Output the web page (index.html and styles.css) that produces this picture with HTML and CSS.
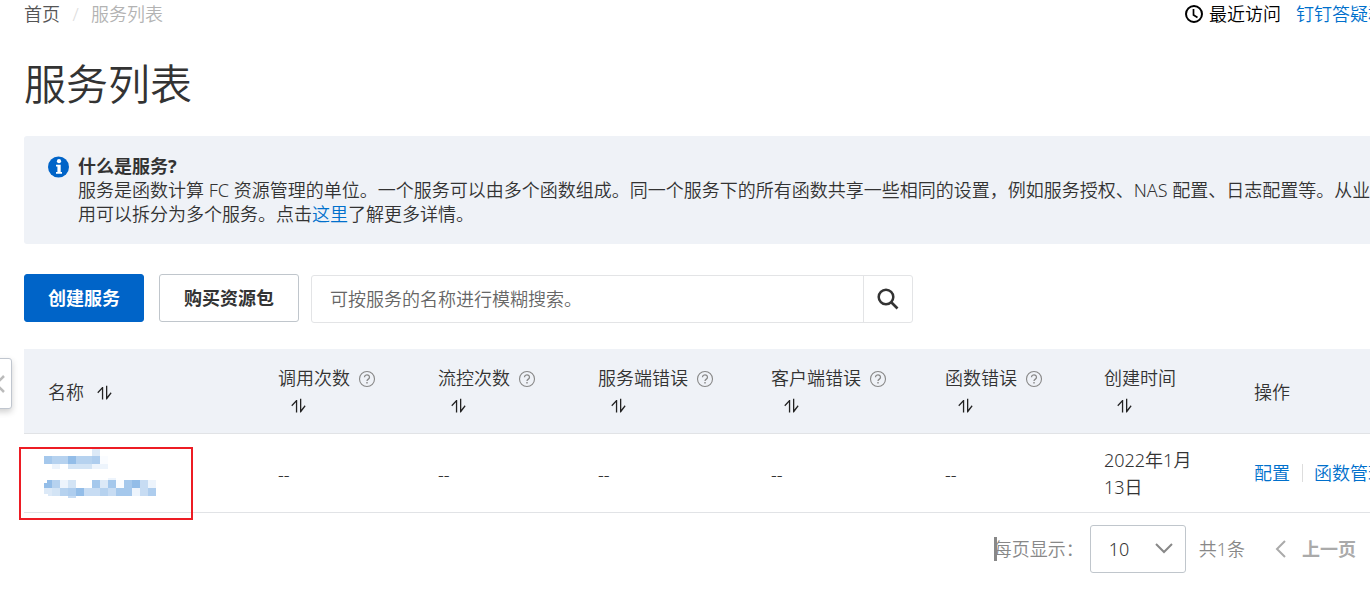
FILE: index.html
```html
<!DOCTYPE html>
<html lang="zh-CN">
<head>
<meta charset="utf-8">
<title>服务列表</title>
<link rel="stylesheet" href="styles.css">
</head>
<body>
<svg class="defs" aria-hidden="true">
  <symbol id="help" viewBox="0 0 18 18"><circle cx="9" cy="9" r="7.5" fill="none" stroke="#888" stroke-width="1.1"/><path d="M6.500 7.300a2.500 2.300 0 1 1 3.900 1.800c-.9.600-1.400.9-1.400 2" fill="none" stroke="#888" stroke-width="1.300"/><path d="M8.300 12h1.400v1.400H8.300z" fill="#888"/></symbol>
  <symbol id="sort" viewBox="0 0 15 15"><path d="M6.200 2v12.500H4.900V4.300L1.200 8.200l-.9-.9L5.200 2zM9 .8h1.300v10.700l3.400-4.200.9 1-4.700 6.200H9z" fill="#222"/></symbol>
</svg>
<button class="handle" type="button" aria-label="收起"><svg width="12" height="18" viewBox="0 0 12 18"><path d="M11 1 3 9l8 8" fill="none" stroke="#bbb" stroke-width="2.500"/></svg></button>
<main class="page">
  <header class="top">
    <nav class="crumbs"><a class="home" href="#">首页</a><span class="slash">/</span><span>服务列表</span></nav>
    <div class="quick">
      <button class="recent" type="button"><svg width="20" height="20" viewBox="0 0 20 20"><circle cx="10" cy="10" r="8" fill="none" stroke="#000" stroke-width="2"/><path d="M9.500 5v6l4 2.500" fill="none" stroke="#000" stroke-width="1.700"/></svg>最近访问</button>
      <a href="#">钉钉答疑群</a>
    </div>
  </header>
  <h1 class="title">服务列表</h1>
  <section class="notice">
    <svg class="info" width="22" height="22" viewBox="0 0 22 22"><circle cx="10.500" cy="11" r="10.500" fill="#0064c8"/><circle cx="11" cy="5.200" r="2.100" fill="#fff"/><path d="M8 8.800h4.700v7.300H14v1.600H8v-1.600h1.400v-5.700H8z" fill="#fff"/></svg>
    <div>
      <h2 class="notice-title">什么是服务?</h2>
      <p class="notice-text">服务是函数计算 FC 资源管理的单位。一个服务可以由多个函数组成。同一个服务下的所有函数共享一些相同的设置，例如服务授权、NAS 配置、日志配置等。从业<br>用可以拆分为多个服务。点击<a href="#">这里</a>了解更多详情。</p>
    </div>
  </section>
  <div class="toolbar">
    <button class="btn primary" type="button">创建服务</button>
    <button class="btn" type="button">购买资源包</button>
    <form class="search">
      <input type="text" aria-label="搜索服务" placeholder="可按服务的名称进行模糊搜索。">
      <button type="button" aria-label="搜索"><svg width="24" height="24" viewBox="0 0 24 24"><circle cx="10" cy="10" r="7.300" fill="none" stroke="#333" stroke-width="2.500"/><path d="m15 15 6.500 6.500" stroke="#333" stroke-width="2.600"/></svg></button>
    </form>
  </div>
  <table class="list">
    <colgroup><col class="c-name"><col class="c-count"><col class="c-count"><col class="c-error"><col class="c-client"><col class="c-func"><col class="c-time"><col></colgroup>
    <thead>
      <tr>
        <th>名称<svg class="sort"><use href="#sort"/></svg></th>
        <th>调用次数<svg class="help"><use href="#help"/></svg> <svg class="sort"><use href="#sort"/></svg></th>
        <th>流控次数<svg class="help"><use href="#help"/></svg> <svg class="sort"><use href="#sort"/></svg></th>
        <th>服务端错误<svg class="help"><use href="#help"/></svg> <svg class="sort"><use href="#sort"/></svg></th>
        <th>客户端错误<svg class="help"><use href="#help"/></svg> <svg class="sort"><use href="#sort"/></svg></th>
        <th>函数错误<svg class="help"><use href="#help"/></svg> <svg class="sort"><use href="#sort"/></svg></th>
        <th>创建时间 <svg class="sort"><use href="#sort"/></svg></th>
        <th>操作</th>
      </tr>
    </thead>
    <tbody>
      <tr>
        <td class="name">
          <svg class="mark" width="174" height="73" viewBox="0 0 174 73" shape-rendering="crispEdges">
            <rect x="1" y="1" width="172" height="71" fill="none" stroke="#ed1c24" stroke-width="2"/>
            <path fill="#dce9f7" d="M73 2h8v7h-8zM61 17h8v5h-8zM81 33h8v8h-8zM29 41h4v8h-4zM25 41h4v6h-4z"/>
            <path fill="#a5c8ec" d="M25 9h8v8h-8zM73 33h8v8h-8zM89 33h8v8h-8zM105 33h8v8h-8zM97 41h16v8H97z"/>
            <path fill="#b6d2ef" d="M33 9h16v8H33zM57 9h16v8H57zM33 33h8v8h-8zM41 41h8v8h-8zM81 41h8v8h-8z"/>
            <path fill="#93bde8" d="M49 9h8v8h-8zM28 33h5v8h-8v-5h3zM113 33h8v8h-8zM57 41h8v8h-8z"/>
            <path fill="#aecdee" d="M73 9h8v8h-8zM49 41h8v8h-8zM129 41h8v8h-8z"/>
            <path fill="#c7dcf3" d="M65 41h16v8H65zM89 41h8v8h-8zM121 33h8v8h-8zM121 41h8v8h-8zM49 49h8v2h-8z"/>
            <path fill="#d3e4f5" d="M49 17h24v5H49zM49 33h8v8h-8zM33 41h8v8h-8z"/>
            <path fill="#edf4fc" d="M33 17h8v5h-8zM73 17h16v5H73zM41 33h8v8h-8zM89 31h8v2h-8zM129 33h8v8h-8zM113 41h8v8h-8z"/>
            <path fill="#fafcff" d="M81 9h8v8h-8zM97 33h8v8h-8z"/>
          </svg>
        </td>
        <td>--</td><td>--</td><td>--</td><td>--</td><td>--</td>
        <td>2022年1月13日</td>
        <td class="actions"><a href="#">配置</a><i></i><a href="#">函数管理</a></td>
      </tr>
    </tbody>
  </table>
  <footer class="pager">
    <label class="size-label" for="size">每页显示：</label>
    <span class="size">
      <select id="size"><option>10</option></select>
      <svg width="18" height="12" viewBox="0 0 18 12"><path d="m1 1 8 8 8-8" fill="none" stroke="#888" stroke-width="2"/></svg>
    </span>
    <span class="total">共1条</span>
    <button class="prev" type="button" disabled><svg width="12" height="18" viewBox="0 0 12 18"><path d="M10 1 2 9l8 8" fill="none" stroke="#aaa" stroke-width="2"/></svg>上一页</button>
  </footer>
</main>
</body>
</html>
```
FILE: styles.css
```css
* { box-sizing: border-box; }
body {
  margin: 0;
  overflow: hidden;
  background: #fff;
  color: #333;
  font: 18px/24px "Noto Sans", "Noto Sans CJK SC", sans-serif;
  font-weight: 350;
}
button, input, select { font: inherit; color: inherit; margin: 0; }
button { cursor: pointer; }
svg { flex: none; }
a { color: #0070cc; text-decoration: none; }
.defs { position: absolute; width: 0; height: 0; }
.page { padding: 2px 0 0 24px; }
.top { display: flex; justify-content: space-between; white-space: nowrap; }
.crumbs { display: flex; color: #b3b3b3; }
.crumbs .home { color: #555; }
.slash { width: 31px; text-align: center; color: #ddd; }
.quick { display: flex; gap: 15px; margin-right: -16px; }
.recent {
  display: flex;
  align-items: center;
  gap: 5px;
  padding: 0;
  border: 0;
  background: none;
  color: #000;
}
.title { margin: 26px 0 20px; font-size: 42px; line-height: 64px; font-weight: 350; }
.notice {
  display: flex;
  gap: 8px;
  padding: 18px 0 18px 24px;
  overflow: hidden;
  background: #eff2f7;
  border-radius: 3px 0 0 3px;
  white-space: nowrap;
}
.info { margin-top: 2px; }
.notice-title { margin: 0; font-size: 18px; line-height: 24px; font-weight: 700; }
.notice-text { margin: 0; }
.toolbar { display: flex; margin-top: 30px; }
.btn {
  height: 48px;
  padding: 0 24px;
  margin-right: 12px;
  border: 1px solid #c0c6cc;
  border-radius: 3px;
  background: #fff;
  font-weight: 700;
}
.primary {
  margin-right: 15px;
  border-color: #0064c8;
  background: #0064c8;
  color: #fff;
  padding: 0 23px;
}
.search {
  display: flex;
  width: 602px;
  height: 48px;
  margin-top: 1px;
  border: 1px solid #e3e4e6;
  border-radius: 3px;
}
.search input {
  flex: 1;
  min-width: 0;
  padding: 0 18px;
  border: 0;
  background: none;
}
.search input::placeholder { color: #666; opacity: 1; }
.search button {
  display: grid;
  place-items: center;
  width: 49px;
  padding: 0;
  border: 0;
  border-left: 1px solid #e3e4e6;
  background: none;
}
.list {
  width: 100%;
  margin-top: 26px;
  table-layout: fixed;
  border-collapse: separate;
  border-spacing: 0;
  line-height: 27px;
}
.c-name { width: 230px; }
.c-count { width: 160px; }
.c-error { width: 173px; }
.c-client { width: 174px; }
.c-func { width: 159px; }
.c-time { width: 150px; }
.list th, .list td { padding: 12px 24px; border-bottom: 1px solid #e1e3e6; text-align: left; }
.list th { padding: 16px 24px 14px; background: #eff2f7; font-weight: 350; }
.list td { padding: 13px 24px 11px; }
.help { width: 18px; height: 18px; margin-left: 8px; vertical-align: -3px; }
.sort { width: 15px; height: 15px; margin: 0 13px; vertical-align: -1px; }
.name { position: relative; }
.mark { position: absolute; left: -5px; top: 13px; }
.list .actions { padding: 12px 0 12px 24px; white-space: nowrap; }
.actions i {
  display: inline-block;
  width: 1px;
  height: 18px;
  margin: 0 11px 0 12px;
  background: #ddd;
  vertical-align: -2px;
}
.pager {
  display: flex;
  align-items: center;
  justify-content: flex-end;
  padding: 12px 14px 0 0;
  color: #888;
}
.size-label { position: relative; margin-right: 6px; }
.size-label::before {
  content: "";
  position: absolute;
  left: 0;
  width: 3px;
  height: 24px;
  background: #888;
}
.size { position: relative; margin-right: 13px; }
.size select {
  display: block;
  width: 96px;
  height: 48px;
  padding: 0 18px;
  border: 1px solid #c0c6cc;
  border-radius: 3px;
  appearance: none;
  background: none;
  color: #333;
}
.size svg { position: absolute; right: 13px; top: 18px; pointer-events: none; }
.prev {
  display: flex;
  align-items: center;
  gap: 15px;
  margin-left: 30px;
  padding: 0;
  border: 0;
  background: none;
  color: #aaa;
  font-weight: 700;
}
.handle {
  position: absolute;
  left: -8px;
  top: 358px;
  width: 20px;
  height: 51px;
  padding: 0;
  border: 1px solid #c0c6cf;
  border-radius: 3px;
  background: #fff;
  box-shadow: 0 3px 6px #00000030;
}
.handle svg { display: block; }
```
